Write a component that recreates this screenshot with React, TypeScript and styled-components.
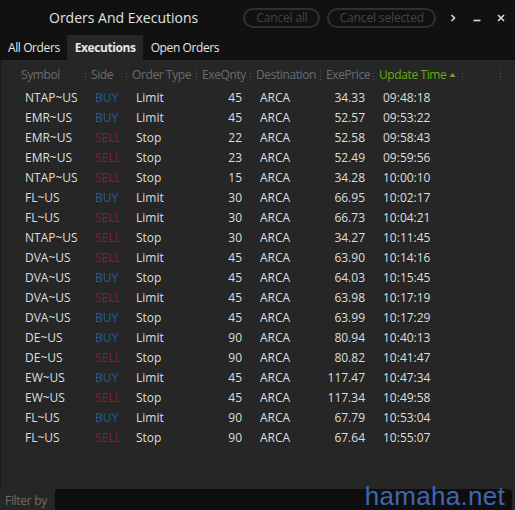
import React from 'react'
import styled, { createGlobalStyle } from 'styled-components'

type Side = 'BUY' | 'SELL'

interface Execution {
  symbol: string
  side: Side
  type: string
  qty: number
  dest: string
  price: string
  time: string
}

const rows: Execution[] = [
  { symbol: 'NTAP~US', side: 'BUY', type: 'Limit', qty: 45, dest: 'ARCA', price: '34.33', time: '09:48:18' },
  { symbol: 'EMR~US', side: 'BUY', type: 'Limit', qty: 45, dest: 'ARCA', price: '52.57', time: '09:53:22' },
  { symbol: 'EMR~US', side: 'SELL', type: 'Stop', qty: 22, dest: 'ARCA', price: '52.58', time: '09:58:43' },
  { symbol: 'EMR~US', side: 'SELL', type: 'Stop', qty: 23, dest: 'ARCA', price: '52.49', time: '09:59:56' },
  { symbol: 'NTAP~US', side: 'SELL', type: 'Stop', qty: 15, dest: 'ARCA', price: '34.28', time: '10:00:10' },
  { symbol: 'FL~US', side: 'BUY', type: 'Limit', qty: 30, dest: 'ARCA', price: '66.95', time: '10:02:17' },
  { symbol: 'FL~US', side: 'SELL', type: 'Limit', qty: 30, dest: 'ARCA', price: '66.73', time: '10:04:21' },
  { symbol: 'NTAP~US', side: 'SELL', type: 'Stop', qty: 30, dest: 'ARCA', price: '34.27', time: '10:11:45' },
  { symbol: 'DVA~US', side: 'SELL', type: 'Limit', qty: 45, dest: 'ARCA', price: '63.90', time: '10:14:16' },
  { symbol: 'DVA~US', side: 'BUY', type: 'Stop', qty: 45, dest: 'ARCA', price: '64.03', time: '10:15:45' },
  { symbol: 'DVA~US', side: 'SELL', type: 'Limit', qty: 45, dest: 'ARCA', price: '63.98', time: '10:17:19' },
  { symbol: 'DVA~US', side: 'BUY', type: 'Stop', qty: 45, dest: 'ARCA', price: '63.99', time: '10:17:29' },
  { symbol: 'DE~US', side: 'BUY', type: 'Limit', qty: 90, dest: 'ARCA', price: '80.94', time: '10:40:13' },
  { symbol: 'DE~US', side: 'SELL', type: 'Stop', qty: 90, dest: 'ARCA', price: '80.82', time: '10:41:47' },
  { symbol: 'EW~US', side: 'BUY', type: 'Limit', qty: 45, dest: 'ARCA', price: '117.47', time: '10:47:34' },
  { symbol: 'EW~US', side: 'SELL', type: 'Stop', qty: 45, dest: 'ARCA', price: '117.34', time: '10:49:58' },
  { symbol: 'FL~US', side: 'BUY', type: 'Limit', qty: 90, dest: 'ARCA', price: '67.79', time: '10:53:04' },
  { symbol: 'FL~US', side: 'SELL', type: 'Stop', qty: 90, dest: 'ARCA', price: '67.64', time: '10:55:07' },
]

const columns = [
  { label: 'Symbol' },
  { label: 'Side' },
  { label: 'Order Type' },
  { label: 'ExeQnty' },
  { label: 'Destination' },
  { label: 'ExePrice' },
  { label: 'Update Time', sorted: true },
  { label: '' },
]

const App = () => {
  return (
    <>
      <GlobalStyle />
      <Window>
        <TitleBar>
          <Title>Orders And Executions</Title>
          <Actions>
            <PillButton>Cancel all</PillButton>
            <PillButton>Cancel selected</PillButton>
          </Actions>
          <WindowControls>
            <ControlIcon viewBox="0 0 10 10">
              <path d="M3.5 2 L6.5 5 L3.5 8" />
            </ControlIcon>
            <ControlIcon viewBox="0 0 10 10">
              <path d="M1.5 7.5 H8.5" />
            </ControlIcon>
            <ControlIcon viewBox="0 0 10 10">
              <path d="M2 2 L8 8 M8 2 L2 8" />
            </ControlIcon>
          </WindowControls>
        </TitleBar>

        <Tabs>
          <Tab>All Orders</Tab>
          <Tab $active>Executions</Tab>
          <Tab>Open Orders</Tab>
        </Tabs>

        <Panel>
          <Grid>
            {columns.map((c, i) => (
              <HeaderCell key={i} $sorted={c.sorted}>
                {c.label}
                {c.sorted && (
                  <SortArrow viewBox="0 0 8 5">
                    <path d="M0 5 L4 0 L8 5 Z" />
                  </SortArrow>
                )}
              </HeaderCell>
            ))}

            {rows.map((r, i) => (
              <React.Fragment key={i}>
                <Cell>{r.symbol}</Cell>
                <Cell $side={r.side}>{r.side}</Cell>
                <Cell>{r.type}</Cell>
                <Cell $right>{r.qty}</Cell>
                <Cell>{r.dest}</Cell>
                <Cell $right>{r.price}</Cell>
                <Cell>{r.time}</Cell>
                <Cell />
              </React.Fragment>
            ))}
          </Grid>
        </Panel>

        <FilterBar>
          <FilterLabel>Filter by</FilterLabel>
          <FilterInput />
          <Watermark>hamaha.net</Watermark>
        </FilterBar>
      </Window>
    </>
  )
}

export default App

// Styles
const GlobalStyle = createGlobalStyle`
  html, body {
    margin: 0;
    padding: 0;
    background: #111111;
  }
  body {
    font-family: 'Open Sans', 'Noto Sans', sans-serif;
  }
`

const Window = styled.div`
  width: 515px;
  height: 510px;
  display: flex;
  flex-direction: column;
  background: #111111;
  overflow: hidden;
`

const TitleBar = styled.div`
  height: 35px;
  display: flex;
  align-items: center;
  padding: 0 0 0 49px;
`

const Title = styled.div`
  font-size: 14px;
  color: #e2e2e2;
  flex: 1;
`

const Actions = styled.div`
  display: flex;
  gap: 7px;
  margin-right: 12px;
`

const PillButton = styled.button`
  height: 20px;
  padding: 0 10px 0 11px;
  border: 2px solid #303030;
  border-radius: 10px;
  background: transparent;
  color: #454545;
  font-family: 'Open Sans', sans-serif;
  font-size: 12px;
  letter-spacing: -0.15px;
  line-height: 16px;
`

const WindowControls = styled.div`
  display: flex;
  align-items: center;
  gap: 14px;
  margin-right: 9px;
`

const ControlIcon = styled.svg`
  width: 10px;
  height: 10px;
  fill: none;
  stroke: #d8d8d8;
  stroke-width: 1.6;
`

const Tabs = styled.div`
  height: 25px;
  display: flex;
`

const Tab = styled.div<{ $active?: boolean }>`
  padding: 0 7px 0 8px;
  display: flex;
  align-items: center;
  font-size: 12px;
  letter-spacing: -0.4px;
  color: #e6e6e6;
  font-weight: ${p => (p.$active ? 700 : 400)};
  background: ${p => (p.$active ? '#262626' : 'transparent')};
`

const Panel = styled.div`
  flex: 1;
  background: #262626;
  border-left: 1px solid #1a1a1a;
  padding: 2px 0 0 15px;
`

const Grid = styled.div`
  display: grid;
  grid-template-columns: 70px 41px 70px 54px 70px 53px 89px 38px;
  grid-auto-rows: 20px;
  grid-template-rows: 25px;
`

const HeaderCell = styled.div<{ $sorted?: boolean }>`
  position: relative;
  display: flex;
  align-items: center;
  padding-left: 5px;
  font-size: 12px;
  letter-spacing: -0.4px;
  white-space: nowrap;
  color: ${p => (p.$sorted ? '#6aa91e' : '#6c6c6c')};

  &::after {
    content: '';
    position: absolute;
    right: 0;
    top: 8px;
    width: 1px;
    height: 10px;
    background: repeating-linear-gradient(to bottom, #505050 0 1px, transparent 1px 3px);
  }
`

const SortArrow = styled.svg`
  width: 7px;
  height: 4px;
  margin-left: 3px;
  fill: #6aa91e;
`

const Cell = styled.div<{ $right?: boolean; $side?: Side }>`
  display: flex;
  align-items: center;
  justify-content: ${p => (p.$right ? 'flex-end' : 'flex-start')};
  padding: 0 9px;
  font-size: 12px;
  white-space: nowrap;
  color: ${p => (p.$side === 'BUY' ? '#1f5f93' : p.$side === 'SELL' ? '#85202e' : '#dedede')};
`

const FilterBar = styled.div`
  position: relative;
  height: 22px;
  display: flex;
  align-items: flex-end;
  background: #262626;
`

const FilterLabel = styled.div`
  width: 55px;
  padding-left: 5px;
  box-sizing: border-box;
  font-size: 12px;
  letter-spacing: -0.3px;
  color: #6c6c6c;
  line-height: 18px;
`

const FilterInput = styled.div`
  flex: 1;
  height: 21px;
  margin-right: 3px;
  background: #0e0e0e;
  border-radius: 4px 4px 0 0;
`

const Watermark = styled.div`
  position: absolute;
  right: 10px;
  bottom: 1px;
  line-height: 1;
  font-family: 'Liberation Sans', Arial, sans-serif;
  font-size: 26px;
  letter-spacing: 0.3px;
  color: #4066b0;
  pointer-events: none;
`
